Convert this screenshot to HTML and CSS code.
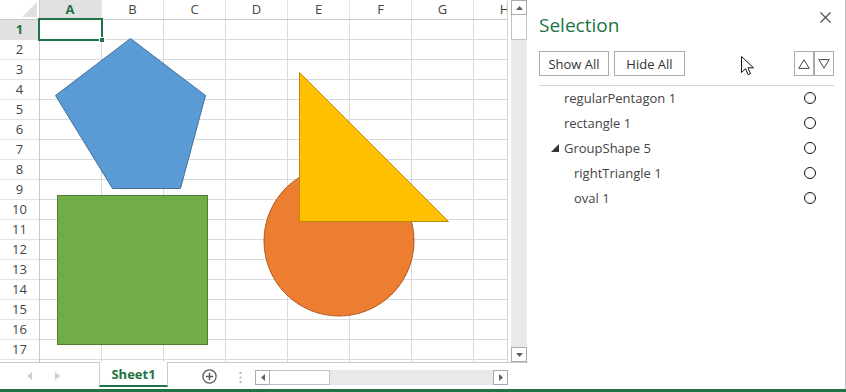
FILE: index.html
```html
<!DOCTYPE html>
<html lang="en">
<head>
<meta charset="utf-8">
<title>Book1 - Selection</title>
<link rel="stylesheet" href="styles.css">
</head>
<body>
<div class="app">
  <div class="workspace">
    <div class="book">
      <div class="sheet-row">
        <div class="sheet">
          <div class="corner"><span class="corner-tri"></span></div>
          <div class="col-heads">
            <div class="col-head active">A</div>
            <div class="col-head">B</div>
            <div class="col-head">C</div>
            <div class="col-head">D</div>
            <div class="col-head">E</div>
            <div class="col-head">F</div>
            <div class="col-head">G</div>
            <div class="col-head">H</div>
          </div>
          <div class="row-heads">
            <div class="row-head active">1</div>
            <div class="row-head">2</div>
            <div class="row-head">3</div>
            <div class="row-head">4</div>
            <div class="row-head">5</div>
            <div class="row-head">6</div>
            <div class="row-head">7</div>
            <div class="row-head">8</div>
            <div class="row-head">9</div>
            <div class="row-head">10</div>
            <div class="row-head">11</div>
            <div class="row-head">12</div>
            <div class="row-head">13</div>
            <div class="row-head">14</div>
            <div class="row-head">15</div>
            <div class="row-head">16</div>
            <div class="row-head">17</div>
            <div class="row-head"></div>
          </div>
          <div class="cells"></div>
          <div class="cell-cursor"><span class="fill-handle"></span></div>
          <svg class="shapes" width="507" height="362" viewBox="0 0 507 362">
            <!-- regularPentagon 1 -->
            <polygon points="130.5,38.5 205.5,95.5 180.5,188.5 112.5,188.5 55.5,95.5" fill="#5b9bd5" stroke="#41719c" stroke-width="1"/>
            <!-- rectangle 1 -->
            <rect x="57.5" y="195.5" width="150" height="149" fill="#70ad47" stroke="#507e32" stroke-width="1"/>
            <!-- GroupShape 5: oval 1 + rightTriangle 1 -->
            <circle cx="339" cy="241" r="75" fill="#ed7d31" stroke="#ae5a21" stroke-width="1"/>
            <polygon points="299.5,72.5 448.5,221.5 299.5,221.5" fill="#ffc000" stroke="#bc8c00" stroke-width="1"/>
          </svg>
        </div>
        <div class="vscroll">
          <div class="sb-btn"><svg width="7" height="4" viewBox="0 0 7 4"><polygon points="0,4 7,4 3.5,0" fill="#606060"/></svg></div>
          <div class="sb-thumb-v"></div>
          <div class="sb-track"></div>
          <div class="sb-btn"><svg width="7" height="4" viewBox="0 0 7 4"><polygon points="0,0 7,0 3.5,4" fill="#606060"/></svg></div>
        </div>
      </div>
      <div class="tabbar">
        <div class="tab-nav">
          <svg width="5" height="8" viewBox="0 0 5 8"><polygon points="5,0 5,8 0,4" fill="#cfcfcf"/></svg>
          <svg width="5" height="8" viewBox="0 0 5 8"><polygon points="0,0 0,8 5,4" fill="#cfcfcf"/></svg>
        </div>
        <div class="sheet-tab">Sheet1</div>
        <svg class="tab-add" width="15" height="15" viewBox="0 0 15 15">
          <circle cx="7.5" cy="7.5" r="6.6" fill="none" stroke="#5a5a5a" stroke-width="1.3"/>
          <path d="M7.5 3.8v7.4M3.8 7.5h7.4" stroke="#5a5a5a" stroke-width="1.5"/>
        </svg>
        <svg class="tab-split" width="3" height="11" viewBox="0 0 3 11">
          <rect x="0.5" y="0" width="2" height="2" fill="#b5b5b5"/>
          <rect x="0.5" y="4.5" width="2" height="2" fill="#b5b5b5"/>
          <rect x="0.5" y="9" width="2" height="2" fill="#b5b5b5"/>
        </svg>
        <div class="hscroll">
          <div class="sb-btn-h"><svg width="4" height="7" viewBox="0 0 4 7"><polygon points="4,0 4,7 0,3.5" fill="#606060"/></svg></div>
          <div class="sb-thumb-h"></div>
          <div class="sb-track-h"></div>
          <div class="sb-btn-h"><svg width="4" height="7" viewBox="0 0 4 7"><polygon points="0,0 0,7 4,3.5" fill="#606060"/></svg></div>
        </div>
      </div>
    </div>

    <aside class="pane">
      <div class="pane-head">
        <h1 class="pane-title">Selection</h1>
        <svg class="pane-close" width="11" height="11" viewBox="0 0 11 11">
          <path d="M0.5 0.5l10 10M10.5 0.5l-10 10" stroke="#555" stroke-width="1.3"/>
        </svg>
      </div>
      <div class="pane-tools">
        <button class="btn btn-show">Show All</button>
        <button class="btn btn-hide">Hide All</button>
        <div class="order">
          <button class="btn-order"><svg width="12" height="10" viewBox="0 0 12 10"><polygon points="6,0.8 11.2,9.4 0.8,9.4" fill="none" stroke="#444" stroke-width="1"/></svg></button>
          <button class="btn-order"><svg width="12" height="10" viewBox="0 0 12 10"><polygon points="0.8,0.6 11.2,0.6 6,9.2" fill="none" stroke="#444" stroke-width="1"/></svg></button>
        </div>
      </div>
      <ul class="shape-list">
        <li class="shape"><span class="shape-name">regularPentagon 1</span><span class="eye"></span></li>
        <li class="shape"><span class="shape-name">rectangle 1</span><span class="eye"></span></li>
        <li class="shape group"><svg class="twisty" width="8" height="8" viewBox="0 0 8 8"><polygon points="8,0 8,8 0,8" fill="#333"/></svg><span class="shape-name">GroupShape 5</span><span class="eye"></span></li>
        <li class="shape child"><span class="shape-name">rightTriangle 1</span><span class="eye"></span></li>
        <li class="shape child"><span class="shape-name">oval 1</span><span class="eye"></span></li>
      </ul>
      <svg class="pointer" width="13" height="20" viewBox="0 0 13 20">
        <path d="M0.5 0.5v16l4-3.8 2.6 6 2.4-1-2.6-5.9h5.6z" fill="#fff" stroke="#111" stroke-width="1" stroke-linejoin="round"/>
      </svg>
    </aside>
  </div>
  <div class="statusline"></div>
</div>
</body>
</html>
```

FILE: styles.css
```css
* {
  box-sizing: border-box;
}

html, body {
  margin: 0;
  padding: 0;
  background: #fff;
}

body {
  font-family: "Open Sans", "Noto Sans", sans-serif;
  color: #444;
}

.app {
  width: 846px;
  height: 392px;
  display: flex;
  flex-direction: column;
  overflow: hidden;
}

.workspace {
  display: flex;
  height: 389px;
}

.book {
  width: 528px;
  display: flex;
  flex-direction: column;
}

.sheet-row {
  display: flex;
  height: 362px;
}

/* ---------- worksheet grid ---------- */
.sheet {
  position: relative;
  width: 508px;
  height: 362px;
  display: grid;
  grid-template-columns: 40px 468px;
  grid-template-rows: 20px 342px;
  border-right: 1px solid #d4d4d4;
  overflow: hidden;
}

.corner {
  position: relative;
  border-right: 1px solid #c9c9c9;
  border-bottom: 1px solid #c9c9c9;
}

.corner-tri {
  position: absolute;
  right: 2px;
  bottom: 2px;
  width: 0;
  height: 0;
  border-left: 15px solid transparent;
  border-bottom: 15px solid #dfdfdf;
}

.col-heads {
  display: flex;
  border-bottom: 1px solid #c9c9c9;
  overflow: hidden;
}

.col-head {
  flex: 0 0 62px;
  height: 19px;
  border-right: 1px solid #e3e3e3;
  font-size: 13px;
  line-height: 19px;
  text-align: center;
  color: #444;
}

.col-head.active {
  margin-left: -1px;
  flex-basis: 63px;
  background: #e1e1e1;
  color: #217346;
  font-weight: 700;
}

.row-heads {
  display: flex;
  flex-direction: column;
  border-right: 1px solid #c9c9c9;
  overflow: hidden;
}

.row-head {
  flex: 0 0 20px;
  border-bottom: 1px solid #e3e3e3;
  font-size: 13px;
  line-height: 19px;
  text-align: center;
  color: #444;
}

.row-head.active {
  margin-top: -1px;
  flex-basis: 21px;
  padding-top: 1px;
  background: #e1e1e1;
  color: #217346;
  font-weight: 700;
}

.cells {
  background-image:
    linear-gradient(to left, #dadada 1px, transparent 1px),
    linear-gradient(to top, #dadada 1px, transparent 1px);
  background-size: 62px 100%, 100% 20px;
}

.cell-cursor {
  position: absolute;
  left: 38px;
  top: 18px;
  width: 65px;
  height: 23px;
  border: 2px solid #217346;
}

.fill-handle {
  position: absolute;
  left: 59px;
  top: 17px;
  width: 6px;
  height: 6px;
  background: #217346;
  border: 1px solid #fff;
}

.shapes {
  position: absolute;
  left: 0;
  top: 0;
}

/* ---------- scroll bars ---------- */
.vscroll {
  width: 16px;
  margin-left: 3px;
  display: flex;
  flex-direction: column;
  background: #e9e9e9;
}

.sb-btn {
  height: 15px;
  background: #fff;
  border: 1px solid #ababab;
  display: flex;
  align-items: center;
  justify-content: center;
}

.sb-thumb-v {
  height: 25px;
  background: #fff;
  border: 1px solid #c2c2c2;
  border-top: 0;
}

.sb-track {
  flex: 1;
}

.tabbar {
  height: 27px;
  display: flex;
  align-items: flex-start;
  border-top: 1px solid #c9c9c9;
}

.tab-nav {
  width: 99px;
  height: 26px;
  display: flex;
  align-items: center;
  gap: 23px;
  padding-left: 27px;
}

.sheet-tab {
  width: 69px;
  height: 25px;
  margin-top: -1px;
  background: #fff;
  border-left: 1px solid #c9c9c9;
  border-right: 1px solid #c9c9c9;
  border-bottom: 2px solid #217346;
  font-size: 13px;
  font-weight: 700;
  line-height: 24px;
  text-align: center;
  color: #217346;
}

.tab-add {
  margin-left: 34px;
  margin-top: 6px;
}

.tab-split {
  margin-left: 22px;
  margin-top: 9px;
}

.hscroll {
  width: 253px;
  height: 15px;
  margin-left: 13px;
  margin-top: 7px;
  display: flex;
  background: #e9e9e9;
}

.sb-btn-h {
  width: 15px;
  background: #fff;
  border: 1px solid #ababab;
  display: flex;
  align-items: center;
  justify-content: center;
}

.sb-thumb-h {
  width: 60px;
  background: #fff;
  border: 1px solid #c2c2c2;
  border-left: 0;
}

.sb-track-h {
  flex: 1;
}

/* ---------- selection pane ---------- */
.pane {
  position: relative;
  flex: 1;
  padding: 11px 11px 0 11px;
  border-right: 1px solid #c6c6c6;
}

.pane-head {
  display: flex;
  justify-content: space-between;
  align-items: flex-start;
  height: 28px;
}

.pane-title {
  margin: 0;
  font-family: "Open Sans", sans-serif;
  font-size: 19px;
  font-weight: 400;
  line-height: 28px;
  color: #217346;
}

.pane-close {
  margin-top: 1px;
  margin-right: 3px;
}

.pane-tools {
  display: flex;
  align-items: center;
  gap: 5px;
  margin-top: 12px;
  padding-bottom: 9px;
  border-bottom: 1px solid #d4d4d4;
}

.btn {
  height: 25px;
  padding: 0;
  background: #fff;
  border: 1px solid #ababab;
  font-family: "Open Sans", sans-serif;
  font-size: 13px;
  color: #333;
}

.btn-show {
  width: 70px;
}

.btn-hide {
  width: 71px;
}

.order {
  margin-left: auto;
  display: flex;
}

.btn-order {
  width: 20px;
  height: 25px;
  padding: 0;
  background: #fff;
  border: 1px solid #ababab;
  display: flex;
  align-items: center;
  justify-content: center;
}

.shape-list {
  list-style: none;
  margin: 0;
  padding: 0;
}

.shape {
  display: flex;
  align-items: center;
  height: 25px;
  padding-left: 25px;
  padding-right: 18px;
  padding-bottom: 2px;
  font-size: 13px;
  color: #444;
}

.shape.group {
  padding-left: 12px;
}

.twisty {
  margin-right: 5px;
}

.shape.child {
  padding-left: 35px;
}

.shape-name {
  flex: 1;
}

.eye {
  width: 12px;
  height: 12px;
  border: 1px solid #111;
  border-radius: 50%;
}

.pointer {
  position: absolute;
  left: 213px;
  top: 56px;
}

.statusline {
  height: 3px;
  background: #217346;
}
```
